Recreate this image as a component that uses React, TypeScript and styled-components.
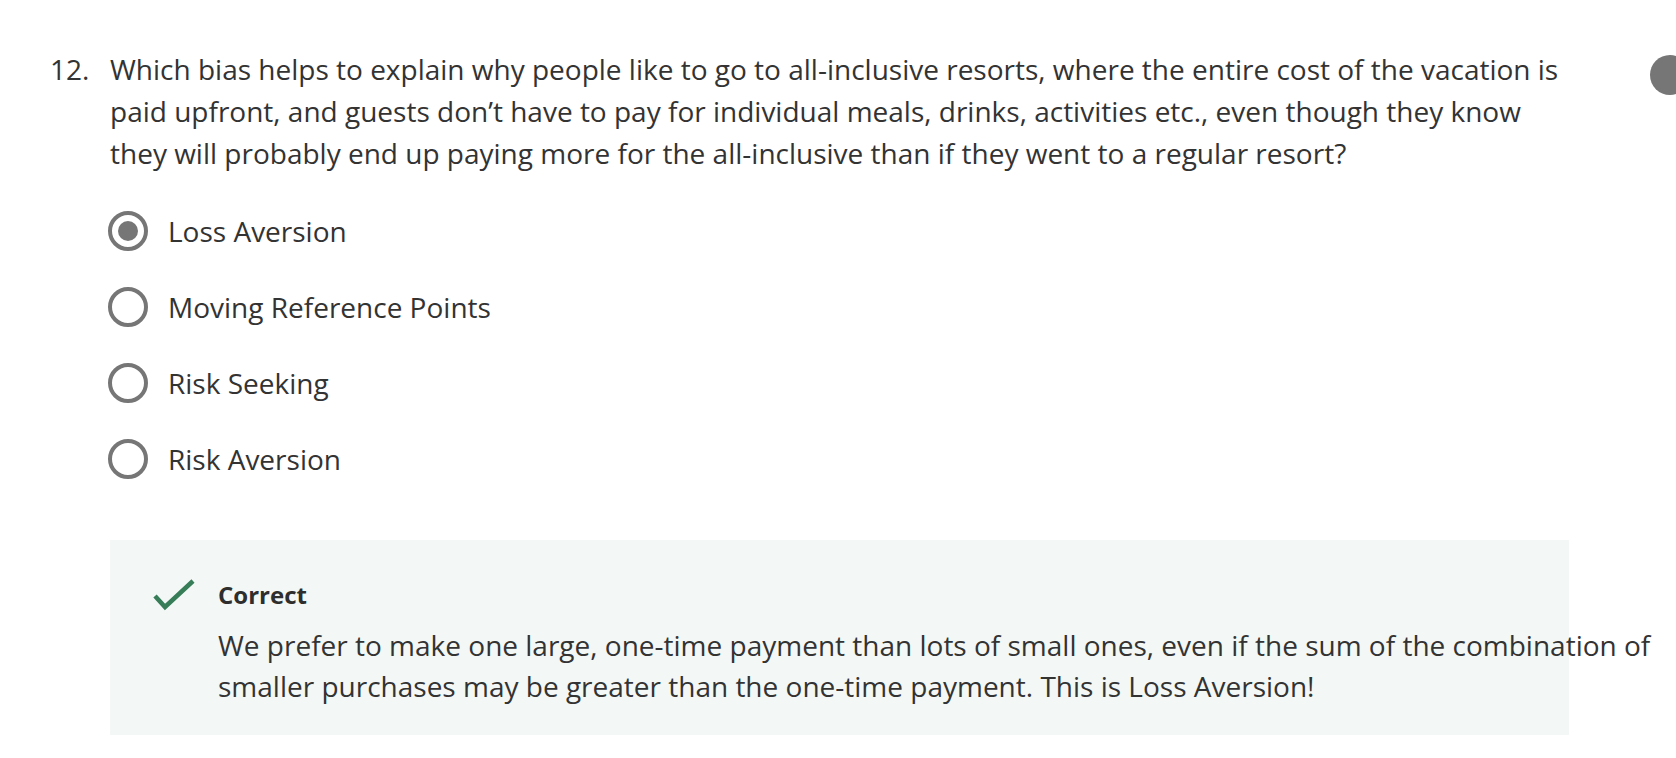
import React from "react";
import styled, { createGlobalStyle } from "styled-components";

const Global = createGlobalStyle`
  html, body { margin: 0; padding: 0; background: #ffffff; overflow: hidden; }
  body { font-family: "Open Sans", "Noto Sans", sans-serif; color: #333333; }
`;

const Page = styled.div`
  position: relative;
  width: 1676px;
  height: 758px;
  padding: 48px 0 0 50px;
  box-sizing: border-box;
`;

const Question = styled.div`
  display: flex;
  align-items: flex-start;
`;

const Number = styled.div`
  width: 60px;
  flex-shrink: 0;
  font-size: 28px;
  line-height: 42px;
`;

const Body = styled.div`
  width: 1459px;
  flex-shrink: 0;
`;

const Prompt = styled.p`
  margin: 0;
  font-size: 28px;
  line-height: 42px;
`;

const Options = styled.div`
  display: flex;
  flex-direction: column;
  margin-top: 19px;
`;

const Option = styled.label`
  display: flex;
  align-items: center;
  height: 76px;
  gap: 20px;
  font-size: 28px;
  cursor: pointer;
`;

const Radio = styled.span<{ $checked?: boolean }>`
  width: 40px;
  height: 40px;
  box-sizing: border-box;
  border: 4px solid #767676;
  border-radius: 50%;
  display: flex;
  align-items: center;
  justify-content: center;
  margin-left: -2px;
  &::after {
    content: "";
    width: 20px;
    height: 20px;
    border-radius: 50%;
    background: ${(p) => (p.$checked ? "#767676" : "transparent")};
  }
`;

const Feedback = styled.div`
  margin-top: 43px;
  background: #f3f8f6;
  display: flex;
  align-items: flex-start;
  padding: 38px 0 26px 43px;
  height: 195px;
  box-sizing: border-box;
`;

const IconBox = styled.div`
  width: 65px;
  flex-shrink: 0;
  padding-top: 1px;
`;

const FeedbackText = styled.div`
  width: 1459px;
  flex-shrink: 0;
`;

const Verdict = styled.div`
  font-weight: 700;
  font-size: 24px;
  line-height: 34px;
  color: #2e2e2e;
`;

const Explanation = styled.p`
  margin: 13px 0 0;
  font-size: 28px;
  line-height: 41px;
`;

const SideDot = styled.div`
  position: absolute;
  left: 1650px;
  top: 55px;
  width: 40px;
  height: 40px;
  border-radius: 50%;
  background: #767676;
`;

const options = [
  "Loss Aversion",
  "Moving Reference Points",
  "Risk Seeking",
  "Risk Aversion",
];

export default function App() {
  return (
    <>
      <Global />
      <Page>
        <Question>
          <Number>12.</Number>
          <Body>
            <Prompt>
              Which bias helps to explain why people like to go to all-inclusive resorts, where the entire cost of the vacation is paid upfront, and guests don’t have to pay for individual meals, drinks, activities etc., even though they know they will probably end up paying more for the all-inclusive than if they went to a regular resort?
            </Prompt>
            <Options>
              {options.map((o, i) => (
                <Option key={o}>
                  <Radio $checked={i === 0} />
                  {o}
                </Option>
              ))}
            </Options>
            <Feedback>
              <IconBox>
                <svg width="44" height="34" viewBox="0 0 44 34">
                  <polyline
                    points="2,17 12,28 40,2"
                    fill="none"
                    stroke="#367d58"
                    strokeWidth="4.5"
                  />
                </svg>
              </IconBox>
              <FeedbackText>
                <Verdict>Correct</Verdict>
                <Explanation>
                  We prefer to make one large, one-time payment than lots of small ones, even if the sum of the combination of smaller purchases may be greater than the one-time payment. This is Loss Aversion!
                </Explanation>
              </FeedbackText>
            </Feedback>
          </Body>
        </Question>
        <SideDot />
      </Page>
    </>
  );
}
